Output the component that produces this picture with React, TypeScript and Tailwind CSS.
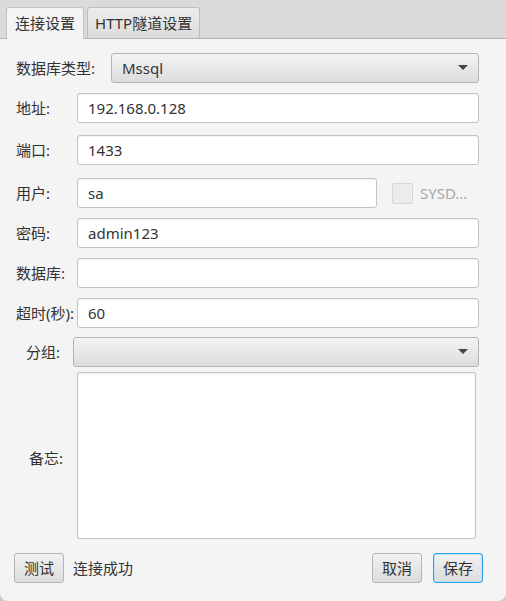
import { ReactNode } from 'react';

const font = { fontFamily: '"Noto Sans", "Noto Sans CJK SC", sans-serif' };

const Field = ({ value, className = '' }: { value?: string; className?: string }) => (
  <div
    className={`h-[30px] bg-white border border-[#c4c4c4] rounded-[3px] shadow-[inset_0_1px_1px_rgba(0,0,0,0.06)] flex items-center pl-[10px] text-[15px] text-[#333] ${className}`}
  >
    {value}
  </div>
);

const Combo = ({ value, className = '' }: { value?: string; className?: string }) => (
  <div
    className={`h-[30px] border border-[#b4b4b4] rounded-[3px] bg-gradient-to-b from-[#f4f4f4] to-[#dcdcdc] flex items-center justify-between pl-[10px] pr-[10px] text-[15px] text-[#333] ${className}`}
  >
    <span>{value}</span>
    <svg width="10" height="6" viewBox="0 0 10 6">
      <path d="M0 0 L10 0 L5 5 Z" fill="#444" />
    </svg>
  </div>
);

const Row = ({ label, children, className = '' }: { label: string; children: ReactNode; className?: string }) => (
  <div className={`flex items-center ${className}`}>
    <span className="w-[61px] shrink-0 text-[15px] text-[#333] whitespace-nowrap">{label}</span>
    {children}
  </div>
);

const Button = ({ children, focused = false }: { children: ReactNode; focused?: boolean }) => (
  <div
    className={`h-[30px] w-[50px] flex items-center justify-center rounded-[3px] bg-gradient-to-b from-[#f2f2f2] to-[#dcdcdc] text-[15px] text-[#333] ${
      focused ? 'border border-[#2aa6e8] shadow-[inset_0_0_0_1px_#b9e2f7]' : 'border border-[#b4b4b4]'
    }`}
  >
    {children}
  </div>
);

export default function App() {
  return (
    <div className="w-[506px] h-[601px] bg-[#c9c9c9]" style={font}>
      <div className="w-full h-full bg-[#f4f4f4] rounded-b-[8px] flex flex-col">
        {/* Tab header */}
        <div className="h-[39px] bg-[#dadada] border-b border-[#b5b5b5] flex items-end pl-[6px] gap-[3px] shrink-0">
          <div className="h-[32px] px-[8px] bg-[#f4f4f4] border border-b-0 border-[#c2c2c2] rounded-t-[3px] flex items-center text-[15px] text-[#333] -mb-px">
            连接设置
          </div>
          <div className="h-[31px] px-[7px] bg-gradient-to-b from-[#ececec] to-[#dcdcdc] border border-b-0 border-[#bdbdbd] rounded-t-[3px] flex items-center text-[15px] text-[#333]">
            HTTP隧道设置
          </div>
        </div>

        {/* Form */}
        <div className="flex flex-col pl-[16px] pr-[27px] pt-[14px]">
          <div className="flex items-center">
            <span className="w-[95px] shrink-0 text-[15px] text-[#333]">数据库类型:</span>
            <Combo value="Mssql" className="flex-1" />
          </div>
          <Row label="地址:" className="mt-[10px]">
            <Field value="192.168.0.128" className="flex-1" />
          </Row>
          <Row label="端口:" className="mt-[12px]">
            <Field value="1433" className="flex-1" />
          </Row>
          <Row label="用户:" className="mt-[13px]">
            <Field value="sa" className="w-[300px]" />
            <div className="ml-[15px] w-[21px] h-[21px] border border-[#d6d6d6] rounded-[2px] bg-[#ececec]" />
            <span className="ml-[7px] text-[15px] text-[#a8a8a8]">SYSD...</span>
          </Row>
          <Row label="密码:" className="mt-[10px]">
            <Field value="admin123" className="flex-1" />
          </Row>
          <Row label="数据库:" className="mt-[10px]">
            <Field className="flex-1" />
          </Row>
          <Row label="超时(秒):" className="mt-[10px]">
            <Field value="60" className="flex-1" />
          </Row>
          <div className="flex items-center mt-[9px]">
            <span className="w-[57px] shrink-0 text-right pr-[13px] text-[15px] text-[#333]">分组:</span>
            <Combo className="flex-1" />
          </div>
          <div className="flex items-center mt-[5px]">
            <span className="w-[61px] shrink-0 text-right pr-[14px] pt-[6px] text-[15px] text-[#333]">备忘:</span>
            <div className="h-[167px] flex-1 mr-[3px] bg-white border border-[#c4c4c4] rounded-[2px] shadow-[inset_0_1px_2px_rgba(0,0,0,0.08)]" />
          </div>
        </div>

        {/* Footer */}
        <div className="flex items-center pl-[14px] pr-[23px] mt-[14px]">
          <Button>测试</Button>
          <span className="ml-[9px] text-[15px] text-[#333]">连接成功</span>
          <div className="flex-1" />
          <Button>取消</Button>
          <div className="w-[11px]" />
          <Button focused>保存</Button>
        </div>
      </div>
    </div>
  );
}
